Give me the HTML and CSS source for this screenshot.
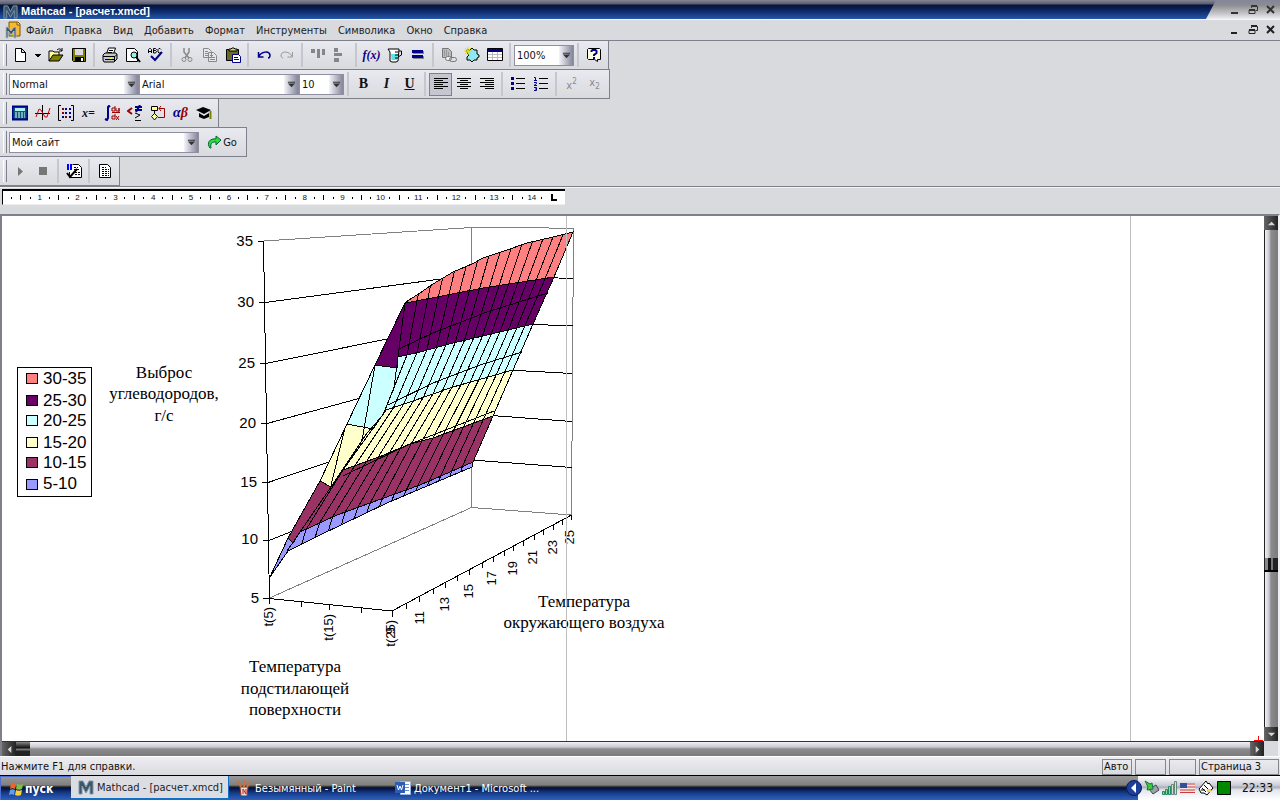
FILE: index.html
```html
<!DOCTYPE html>
<html lang="ru">
<head>
  <meta charset="UTF-8" />
  <meta name="viewport" content="width=device-width, initial-scale=1" />
  <title>Mathcad - [расчет.xmcd]</title>
  <link rel="stylesheet" href="styles.css">
</head>
<body>
  <header class="titlebar">
    <svg class="logo" viewBox="0 0 16 16"><path d="M1 2h4l3 6 3-6h4v13h-3V7l-4 7-4-7v8H1z" fill="#3d5668" stroke="#7d99a8"/></svg>
    <h1>Mathcad - [расчет.xmcd]</h1>
    <div class="window-buttons title-buttons">
      <button aria-label="Свернуть"><svg viewBox="0 0 10 10"><path d="M1 7h7v2H1z" fill="#333"/></svg></button>
      <button aria-label="Восстановить"><svg viewBox="0 0 10 10"><path d="M3.500 3V1.500h6v4H7.500M1 5.500h6v3H1zM1 4.500h6M3 .5h6" fill="none" stroke="#333"/></svg></button>
      <button aria-label="Закрыть"><svg viewBox="0 0 10 10"><path d="M1 1l7 7M8 1l-7 7" stroke="#333" stroke-width="2"/></svg></button>
    </div>
  </header>

  <nav class="menubar" aria-label="Меню">
    <svg class="doc-logo" viewBox="0 0 16 18"><path d="M4 1h9l2 2v12H4z" fill="#fdb827" stroke="#7a5200"/><path d="M12 1v3h3" fill="#fff3b0" stroke="#7a5200"/><path d="M1 6h2l3 4 3-4h2v11H9v-7l-3 4-3-4v7H1z" fill="#3d5668" stroke="#a9bcc6"/></svg>
    <a href="#">Файл</a>
    <a href="#">Правка</a>
    <a href="#">Вид</a>
    <a href="#">Добавить</a>
    <a href="#">Формат</a>
    <a href="#">Инструменты</a>
    <a href="#">Символика</a>
    <a href="#">Окно</a>
    <a href="#">Справка</a>
    <div class="window-buttons">
      <button aria-label="Свернуть документ"><svg viewBox="0 0 10 10"><path d="M1 7h6v2H1z" fill="#222"/></svg></button>
      <button aria-label="Восстановить документ"><svg viewBox="0 0 10 10"><path d="M3.500 3V1.500h6v4H7.500M1 5.500h6v3H1zM1 4.500h6M3 .5h6" fill="none" stroke="#222"/></svg></button>
      <button aria-label="Закрыть документ"><svg viewBox="0 0 10 10"><path d="M1 1l7 7M8 1l-7 7" stroke="#222" stroke-width="2"/></svg></button>
    </div>
  </nav>

  <div class="toolbars">
    <div class="toolbar" role="toolbar" aria-label="Стандартная">
      <button aria-label="Создать"><svg viewBox="0 0 16 16"><path d="M3.500 1.500h6l4 4v9h-10zM9.500 1.500v4h4" fill="#fff" stroke="#000"/></svg></button>
      <button class="narrow" aria-label="Шаблоны"><svg viewBox="0 0 16 16"><path d="M5 7h6v1h-1v1H9v1H7V9H6V8H5z"/></svg></button>
      <button aria-label="Открыть"><svg viewBox="0 0 16 16"><path d="M1 14V4h4l1 1h5v3" fill="#ff9" stroke="#000"/><path d="M1 14l4-6h10l-4 6z" fill="#808000" stroke="#000"/><path d="M9 3c2-2 4-1 5 1M14 1v3h-3" fill="none" stroke="#000"/></svg></button>
      <button aria-label="Сохранить"><svg viewBox="0 0 16 16"><path d="M1.500 1.500h13v13h-12l-1-1z" fill="#808000" stroke="#000"/><path d="M4 2h8v6H4z" fill="#dadbe0"/><path d="M4 10h9v5H4z"/><path d="M10 11h2v3h-2z" fill="#fff"/></svg></button>
      <span class="sep"></span>
      <button aria-label="Печать"><svg viewBox="0 0 16 16"><path d="M4.500 7l2-6h7l-2 6" fill="#fff" stroke="#000"/><path d="M7 3.500h4M6 5.500h4" stroke="#000"/><path d="M1 8l2-2h11l1 2v4l-3 3H2l-1-2z" fill="#c6c6c6" stroke="#000"/><path d="M1 9.500h12l2-2M3 12.500h9M12.500 10v4" stroke="#000" fill="none"/><path d="M8 11h2v1H8z" fill="#ff0"/></svg></button>
      <button aria-label="Просмотр"><svg viewBox="0 0 16 16"><path d="M1.500 1.500h8l3 3v10h-11z" fill="#fff" stroke="#000"/><circle cx="9" cy="8" r="3" fill="#9ee" stroke="#000"/><path d="M11 10l4 5" stroke="#000" stroke-width="2"/></svg></button>
      <button aria-label="Орфография"><svg viewBox="0 0 16 16"><path d="M.5 6V2.500l1-1h1l1 1V6M1 4.500h3M5.500 6V1.500h2l1 1-1 1 1 1-1 1.500zM5.500 3.500h2M13 2.500l-1-1h-1l-1 1V5l1 1h1l1-1" fill="none" stroke="#000"/><path d="M3 9l4 4 7-8" fill="none" stroke="#008" stroke-width="2"/></svg></button>
      <span class="sep"></span>
      <button aria-label="Вырезать"><svg viewBox="0 0 16 16"><path d="M5 1v4l5 6M10 1v4l-4 6" fill="none" stroke="#888" stroke-width="1.500"/><circle cx="5" cy="12.500" r="2" fill="none" stroke="#888"/><circle cx="11" cy="12.500" r="2" fill="none" stroke="#888"/></svg></button>
      <button aria-label="Копировать"><svg viewBox="0 0 16 16"><path d="M1.500 1.500h5l3 3v6h-8zM6.500 5.500h5l3 3v6h-8z" fill="#e6e6ec" stroke="#888"/><path d="M3 4.500h3M3 6.500h3M3 8.500h3M8 8.500h3M8 10.500h5M8 12.500h5" stroke="#888"/></svg></button>
      <button aria-label="Вставить"><svg viewBox="0 0 16 16"><path d="M1.500 2.500h12v11h-12z" fill="#6b6b2a" stroke="#000"/><path d="M4 4V2h2l1-1h2l1 1h2v2z" fill="#dd6" stroke="#000"/><path d="M7.500 7.500h6l2 2v6h-8z" fill="#fff" stroke="#008"/><path d="M9 10.500h4M9 12.500h5" stroke="#008"/></svg></button>
      <span class="sep"></span>
      <button aria-label="Отменить"><svg viewBox="0 0 16 16"><path d="M2.500 5v5h5M3 9c2-4 10-6 11-1 0 2-1 3-2 3" fill="none" stroke="#008" stroke-width="1.500"/></svg></button>
      <button aria-label="Повторить"><svg viewBox="0 0 16 16"><path d="M13.500 5v5h-5M13 9C11 5 3 3 2 8c0 2 1 3 2 3" fill="none" stroke="#999"/></svg></button>
      <span class="sep"></span>
      <button aria-label="Выровнять по верху"><svg viewBox="0 0 16 16"><path d="M1 2h4v4H1zM7 2h3v9H7zM12 2h3v6h-3z" fill="#85868c"/></svg></button>
      <button aria-label="Выровнять по левому краю"><svg viewBox="0 0 16 16"><path d="M1 1h4v4H1zM1 6h8v3H1zM1 11h5v4H1z" fill="#85868c"/></svg></button>
      <span class="sep"></span>
      <button class="fx" aria-label="Вставить функцию">f(x)</button>
      <button aria-label="Единицы"><svg viewBox="0 0 16 16"><path d="M1 2h11l-1 12-2 1H5l-2-1L3 5z" fill="#fff" stroke="#000"/><path d="M4 7h7l-.500 6H4.500z" fill="#5de0e8"/><path d="M12 4h2.500v4L11 10M8 5h3M8 8h3M8 11h3" fill="none" stroke="#000"/></svg></button>
      <button aria-label="Вычислить"><svg viewBox="0 0 16 16"><path d="M3 4h11v3H3zM3 9h11v3H3z" fill="#888"/><path d="M2 3h11v3H2zM2 8h11v3H2z" fill="#008"/></svg></button>
      <span class="sep"></span>
      <button aria-label="Гиперссылка"><svg viewBox="0 0 16 16"><path d="M1.500 1.500h6l3 3v6h-9z" fill="#bbb" stroke="#777"/><path d="M3 4h4M3 6h5M3 8h5" stroke="#777" stroke-dasharray="1 1"/><rect x="4.500" y="9.500" width="6" height="4" rx="2" fill="#eee" stroke="#777"/><rect x="8.500" y="10.500" width="7" height="4" rx="2" fill="none" stroke="#777"/></svg></button>
      <button aria-label="Компонент"><svg viewBox="0 0 16 16"><path d="M3 3h3l2-2 2 2h3v4l2 1v2l-2 1v2h-3l-2 2-2-2H3v-3l2-2-2-2z" fill="#8eeaf0" stroke="#000"/><path d="M1 1l6 6M7 1L1 7M4 0v8M0 4h8" stroke="#e6dc00"/></svg></button>
      <button aria-label="Таблица"><svg viewBox="0 0 16 16"><path d="M.5 1.500h15v12H.5z" fill="#fff" stroke="#000"/><path d="M1 2h14v3H1z" fill="#008"/><path d="M5.500 5v8M10.500 5v8M1 7.500h14M1 10.500h14" stroke="#bbb"/></svg></button>
      <span class="sep"></span>
      <span class="combo combo-zoom"><select aria-label="Масштаб"><option>100%</option></select><svg viewBox="0 0 10 10"><path d="M1 2h8v1H1zM1 4h8L5 8z"/></svg></span>
      <span class="sep"></span>
      <button aria-label="Помощь"><svg viewBox="0 0 16 16"><path d="M2.500 1.500h11l1 1v10h-3v2l-3-2h-6l-1-1v-9z" fill="#fffde0" stroke="#000"/><path d="M5.500 5V4l1-1h3l1 1v2L8 8v1" fill="none" stroke="#008" stroke-width="2"/><path d="M7 10h2v2H7z" fill="#008"/></svg></button>
    </div>

    <div class="toolbar" role="toolbar" aria-label="Форматирование">
      <span class="combo combo-style"><select aria-label="Стиль"><option>Normal</option></select><svg viewBox="0 0 10 10"><path d="M1 2h8v1H1zM1 4h8L5 8z"/></svg></span>
      <span class="combo combo-font"><select aria-label="Шрифт"><option>Arial</option></select><svg viewBox="0 0 10 10"><path d="M1 2h8v1H1zM1 4h8L5 8z"/></svg></span>
      <span class="combo combo-size"><select aria-label="Размер"><option>10</option></select><svg viewBox="0 0 10 10"><path d="M1 2h8v1H1zM1 4h8L5 8z"/></svg></span>
      <span class="sep"></span>
      <button class="letter"><b>B</b></button>
      <button class="letter"><i>I</i></button>
      <button class="letter"><u>U</u></button>
      <span class="sep"></span>
      <button class="pressed" aria-label="По левому краю"><svg viewBox="0 0 16 16"><path d="M1 2.500h14M1 4.500h9M1 6.500h14M1 8.500h9M1 10.500h14M1 12.500h9" stroke="#000"/></svg></button>
      <button aria-label="По центру"><svg viewBox="0 0 16 16"><path d="M1 2.500h14M4 4.500h8M1 6.500h14M4 8.500h8M1 10.500h14M4 12.500h8" stroke="#000"/></svg></button>
      <button aria-label="По правому краю"><svg viewBox="0 0 16 16"><path d="M1 2.500h14M6 4.500h9M1 6.500h14M6 8.500h9M1 10.500h14M6 12.500h9" stroke="#000"/></svg></button>
      <span class="sep"></span>
      <button aria-label="Маркеры"><svg viewBox="0 0 16 16"><path d="M1 1h3v3H1zM1 6h3v3H1zM1 11h3v3H1z" fill="#008"/><path d="M6 2.500h9M6 7.500h9M6 12.500h9" stroke="#000"/></svg></button>
      <button aria-label="Нумерация"><svg viewBox="0 0 16 16"><path d="M1 1.500h1.500V4M1 4.500h3M1 6.500h2.500v1L1 9.500h3M1 11.500h2.500v3H1M2 13h1" stroke="#008" fill="none"/><path d="M6 2.500h9M6 7.500h9M6 12.500h9" stroke="#000"/></svg></button>
      <span class="sep"></span>
      <button class="script" aria-label="Верхний индекс"><span>x<sup>2</sup></span></button>
      <button class="script" aria-label="Нижний индекс"><span>x<sub>2</sub></span></button>
    </div>

    <div class="toolbar" role="toolbar" aria-label="Математика">
      <button aria-label="Калькулятор"><svg viewBox="0 0 16 16"><path d="M.5 1.500h15v13H.5z" fill="#0a5a78" stroke="#008" stroke-width="2"/><path d="M3 3h10v3H3z" fill="#aef0f0"/><path d="M3 8h10M3 10h10M3 12h10" stroke="#dff" stroke-dasharray="2 1"/></svg></button>
      <button aria-label="Графики"><svg viewBox="0 0 16 16"><path d="M7.500 0v15M0 8.500h15" stroke="#000"/><path d="M1 12L4 4l2 1 4 7h2l3-9" fill="none" stroke="#d00000"/></svg></button>
      <button aria-label="Матрица"><svg viewBox="0 0 16 16"><path d="M3 .5H.5v15H3M13 .5h2.500v15H13" fill="none" stroke="#000"/><path d="M4 3h2v2H4zM4 7h2v2H4zM7 11h2v2H7z" fill="#800000"/><path d="M7 3h2v2H7zM11 3h2v2h-2zM7 7h2v2H7zM11 7h2v2h-2zM4 11h2v2H4zM11 11h2v2h-2z" fill="#008"/></svg></button>
      <button class="xeq" aria-label="Вычисления">x<b>=</b></button>
      <button aria-label="Матанализ"><svg viewBox="0 0 16 16"><path d="M6 2L5 1 4 2v11l-1 2-2-1" fill="none" stroke="#008" stroke-width="2"/><path d="M8 7.500h8M11 1v5H8V3h3M12 3v3h3V3M15 3v5M11 9v5H8v-3h3M12 11l3 4M15 11l-3 4" fill="none" stroke="#900"/></svg></button>
      <button aria-label="Булева"><svg viewBox="0 0 16 16"><path d="M5 3L1 6l4 3" fill="none" stroke="#900" stroke-width="2"/><path d="M8 2h7M8 5h7M13 0L9 7" stroke="#008" stroke-width="2"/><path d="M8 8l5 2-5 3M8 15.500h6" fill="none" stroke="#000"/></svg></button>
      <button aria-label="Программирование"><svg viewBox="0 0 16 16"><path d="M1.500 1.500h6v4h-6z" fill="#ff9" stroke="#000"/><path d="M4.500 6v3" stroke="#000"/><path d="M4.500 8.500l3 3-3 3.500-3-3.500z" fill="#ff9" stroke="#008"/><path d="M8 12.500h6.500v-9H9M11 1L9 3.500 11 6" fill="none" stroke="#900"/></svg></button>
      <button class="greek" aria-label="Греческие символы"><i>α</i><i>β</i></button>
      <button aria-label="Символика"><svg viewBox="0 0 16 16"><path d="M0 5l7-3 8 3-7 4z"/><path d="M3 8l5 3 5-3v4l-5 2-5-2z"/><path d="M14.500 6v8" stroke="#808000" stroke-width="2"/></svg></button>
    </div>

    <div class="toolbar" role="toolbar" aria-label="Ресурсы">
      <span class="combo combo-site"><select aria-label="Адрес"><option>Мой сайт</option></select><svg viewBox="0 0 10 10"><path d="M1 2h8v1H1zM1 4h8L5 8z"/></svg></span>
      <button class="go"><svg viewBox="0 0 16 16"><path d="M3 14C-1 9 3 4 9 5V2l5 4-5 5V8C5 8 3 9 4 14z" fill="#2fdc3c" stroke="#063"/></svg>Go</button>
    </div>

    <div class="toolbar" role="toolbar" aria-label="Отладка">
      <button aria-label="Пуск"><svg viewBox="0 0 16 16"><path d="M6 4l5 4.500L6 13z" fill="#777"/></svg></button>
      <button aria-label="Стоп"><svg viewBox="0 0 16 16"><path d="M4 4h8v8H4z" fill="#777"/></svg></button>
      <span class="sep"></span>
      <button aria-label="Отладка"><svg viewBox="0 0 16 16"><path d="M6.500 1.500h6l3 3v10h-12V9" fill="#fff" stroke="#000"/><path d="M8 4.500h4M8 6.500h5M9 9.500h5M9 11.500h5" stroke="#000" stroke-dasharray="2 1"/><path d="M1 1h2v6H1zM4 1h2v6H4z" fill="#00f"/><path d="M1 10l3 4 7-8" fill="none" stroke="#000" stroke-width="2"/></svg></button>
      <span class="sep"></span>
      <button aria-label="Журнал"><svg viewBox="0 0 16 16"><path d="M2.500 1.500h8l3 3v10h-11z" fill="#fff" stroke="#000"/><path d="M5 4.500h4M5 6.500h7M5 8.500h7M5 10.500h7M5 12.500h7" stroke="#000" stroke-dasharray="2 1"/></svg></button>
    </div>
  </div>

  <div class="ruler-bar">
    <div class="ruler">
      <div class="ruler-scale" id="rulerScale"></div>
      <svg class="tab-mark" viewBox="0 0 6 8"><path d="M0 0h2v5h4v2H0z"/></svg>
    </div>
  </div>

  <main class="workspace">
    <div class="page">
      <svg class="chart" viewBox="2 216 700 510" role="img" aria-label="Выброс углеводородов">
        <g class="wall">
          <path d="M264 241L471.500 227.500H523L573.500 228.500L571.500 515L471.500 507.500L269.500 598M471.500 227.500V507.500"/>
        </g>
        <g class="line">
          <path d="M263.500 241L269.500 604M258 241.500h6M259 302.500h6M260 363.500h6M261 423.500h6M262 482.500h6M263 540.500h6M263 598.500h6"/>
          <path d="M265 302.500L471 275L573 278.500M266 363.500L471 322L573 326M267 423.500L471 368L572 373.500M268 482.500L471 414L572 421.500M269 540.500L471 460L572 467.500"/>
          <path d="M269.500 598.500L392 611L571.500 515"/>
          <path d="M301 602v5M329.500 605v5M361.500 608v5M392 611v6"/>
          <path id="ticks"/>
        </g>
        <g id="bands"></g>
        <g class="line">
          <path id="mesh"/>
          <path d="M375 365L363 435L360 446L331 487M399 349L433 333L487 312L548 293M388 405L433 383L480 365L522 352M386 454L410 444L494 411M343 476L372 462L410 444M405 303L398 357L394 388L383 415L367 433L331 487L300 532L287 551M345 428L331 485"/>
        </g>
        <g class="axis">
          <text x="253" y="246" text-anchor="end">35</text>
          <text x="254" y="307" text-anchor="end">30</text>
          <text x="255" y="368" text-anchor="end">25</text>
          <text x="256" y="428" text-anchor="end">20</text>
          <text x="257" y="487" text-anchor="end">15</text>
          <text x="258" y="544" text-anchor="end">10</text>
          <text x="259" y="603" text-anchor="end">5</text>
        </g>
        <g class="axis turned" id="turned"></g>
        <g class="caption">
          <text x="164" y="378">Выброс</text>
          <text x="164" y="399">углеводородов,</text>
          <text x="164" y="421">г/с</text>
          <text x="584" y="607">Температура</text>
          <text x="584" y="628">окружающего воздуха</text>
          <text x="295" y="672">Температура</text>
          <text x="295" y="694">подстилающей</text>
          <text x="295" y="715">поверхности</text>
        </g>
        <g class="legend">
          <rect class="legend-box" x="17.500" y="367.500" width="74" height="129"/>
          <rect x="26.500" y="373.500" width="11" height="10" fill="#ff8080"/><text x="43" y="384">30-35</text>
          <rect x="26.500" y="395.500" width="11" height="10" fill="#660066"/><text x="43" y="406">25-30</text>
          <rect x="26.500" y="415.500" width="11" height="10" fill="#ccffff"/><text x="43" y="426">20-25</text>
          <rect x="26.500" y="437.500" width="11" height="10" fill="#ffffcc"/><text x="43" y="448">15-20</text>
          <rect x="26.500" y="457.500" width="11" height="10" fill="#993366"/><text x="43" y="468">10-15</text>
          <rect x="26.500" y="479.500" width="11" height="10" fill="#9999ff"/><text x="43" y="489">5-10</text>
        </g>
      </svg>
      <span class="page-line margin-line"></span>
      <span class="page-line edge-line"></span>
      <svg class="cross" viewBox="0 0 9 9"><path d="M4.500 0v9M0 4.500h9" stroke="#f00"/></svg>
    </div>
    <div class="scroll scroll-v">
      <button aria-label="Вверх"><svg viewBox="0 0 10 10"><path d="M1 7h8L5 3z" fill="#d4d4d4"/></svg></button>
      <span class="track-before"></span>
      <span class="thumb"></span>
      <span class="track-after"></span>
      <button aria-label="Вниз"><svg viewBox="0 0 10 10"><path d="M1 3h8L5 7z" fill="#d4d4d4"/></svg></button>
    </div>
    <div class="scroll scroll-h">
      <button aria-label="Влево"><svg viewBox="0 0 10 10"><path d="M7 1v8L3 5z" fill="#d4d4d4"/></svg></button>
      <span class="thumb"></span>
      <span class="track-after"></span>
      <button aria-label="Вправо"><svg viewBox="0 0 10 10"><path d="M3 1v8l4-4z" fill="#d4d4d4"/></svg></button>
    </div>
  </main>

  <div class="statusbar">
    <span class="hint">Нажмите F1 для справки.</span>
    <span class="cell cell-auto">Авто</span>
    <span class="cell cell-empty"></span>
    <span class="cell cell-small"></span>
    <span class="cell cell-page">Страница 3</span>
  </div>

  <footer class="taskbar">
    <button class="start"><svg viewBox="0 0 16 16"><path d="M2 3c2-2 4-1 5 0L6 8C4 7 3 7 1 8z" fill="#f0642c"/><path d="M8 3c2 1 4 1 6 0l-1 5c-2 1-4 1-6 0z" fill="#7cc142"/><path d="M1 9c2-1 3-1 5 0l-1 5c-2-1-3-1-5 0z" fill="#5aa0ee"/><path d="M7 9c2 1 4 1 6 0l-1 5c-2 1-4 1-6 0z" fill="#fccb3a"/></svg>пуск</button>
    <button class="task active"><svg viewBox="0 0 16 16"><path d="M1 2h4l3 6 3-6h4v13h-3V7l-4 7-4-7v8H1z" fill="#3d5668" stroke="#7d99a8"/></svg>Mathcad - [расчет.xmcd]</button>
    <button class="task"><svg viewBox="0 0 16 16"><path d="M4 7h8l-1 9H5z" fill="#e9d9d2" stroke="#8c3a26"/><path d="M5 7L2 1M8 7V0M11 7l3-5" stroke="#c9703c" stroke-width="2"/><path d="M7 9v5M7 9l3 5V9" stroke="#c22" fill="none"/></svg>Безымянный - Paint</button>
    <button class="task"><svg viewBox="0 0 16 16"><path d="M5.500 1.500h10v13h-10z" fill="#fff" stroke="#9bb4dc"/><path d="M7 4.500h7M7 7.500h7M7 10.500h7" stroke="#6a8fd0"/><path d="M0 2h10v11H0z" fill="#2a5cb8"/><path d="M2 5l1.500 5L5 6l1.500 4L8 5" fill="none" stroke="#fff"/></svg>Документ1 - Microsoft ...</button>
    <div class="tray">
      <svg viewBox="0 0 16 16"><circle cx="8" cy="8" r="7.500" fill="#1c3f9c" stroke="#0a1c50"/><path d="M10 3v10L5 8z" fill="#fff"/></svg>
      <svg viewBox="0 0 16 16"><path d="M5 9l7-4 3 5-6 4z" fill="#9aa4a8" stroke="#445"/><path d="M1 1l5 3 2-1 1 6-6 1 1-3z" fill="#3ecb3a" stroke="#174"/></svg>
      <svg viewBox="0 0 16 16"><path d="M.5 11.500h2v3h-2zM3.500 9.500h2v5h-2zM6.500 6.500h2v8h-2z" fill="#8fe08f" stroke="#286"/><path d="M9.500 4.500h2v10h-2zM12.500 1.500h2v13h-2z" fill="#ddd" stroke="#687"/></svg>
      <svg viewBox="0 0 16 16"><path d="M0 3h15v10H0z" fill="#f3e6e6"/><path d="M0 4h15M0 7h15M0 10h15M0 12.500h15" stroke="#c83c3c"/><path d="M0 3h7v5H0z" fill="#34509c"/></svg>
      <svg viewBox="0 0 16 16"><path d="M1 9l7-8 2 3 1-1 4 5-6 7-3-2H3z" fill="#fff" stroke="#000"/><path d="M6 5l4 4M4 8l4 4M3 10h4" stroke="#000"/><path d="M9 9h4v3H9z" fill="#fc5"/></svg>
      <svg viewBox="0 0 16 16"><path d="M1.500 1.500h13v13h-13z" fill="#080" stroke="#000"/></svg>
      <time>22:33</time>
    </div>
  </footer>

<script>
  const ns = 'http://www.w3.org/2000/svg';

  // ruler: half-centimetre tick, dot, number, dot
  let cells = '<i class="first-dot"></i>';
  for (let n = 1; n <= 14; n++) {
    cells += `<span><i class="tick"></i><i class="dot"></i><em>${n}</em><i class="dot"></i></span>`;
  }
  document.getElementById('rulerScale').innerHTML = cells;

  // level lines of the surface, from 5 up to 35
  const levels = [
    [[270, 577], [288, 551], [320, 535], [387, 503], [472, 467]],
    [[288, 538], [293, 543], [300, 532], [337, 515], [370, 503], [420, 485], [473, 462]],
    [[320, 481], [331, 487], [343, 470], [387, 454], [410, 444], [433, 438], [493, 416]],
    [[347, 424], [373, 429], [386, 410], [410, 402], [453, 387], [513, 370]],
    [[375, 365], [397, 368], [398, 357], [420, 352], [453, 343], [487, 335], [533, 324]],
    [[405, 303], [406, 303], [483, 288], [554, 277]],
    [[405, 303], [406, 302], [420, 293], [433, 284], [453, 272], [472, 264], [483, 258], [507, 250], [527, 243], [553, 237], [573, 232]]
  ];
  const colors = ['#9999ff', '#993366', '#ffffcc', '#ccffff', '#660066', '#ff8080'];

  const bands = document.getElementById('bands');
  colors.forEach((color, i) => {
    const band = document.createElementNS(ns, 'polygon');
    band.setAttribute('points', levels[i].concat([...levels[i + 1]].reverse()).join(' '));
    band.setAttribute('fill', color);
    bands.appendChild(band);
  });

  function heightAt(level, x) {
    for (let i = 2; i < level.length; i++) {
      const [x1, y1] = level[i - 1];
      const [x2, y2] = level[i];
      if (x <= x2) return y1 + (y2 - y1) * (x - x1) / (x2 - x1);
    }
    return level[level.length - 1][1];
  }

  let mesh = '';
  for (let i = 1; i < 15; i++) {
    const t = i / 15 * (1 + 0.12 * (1 - i / 15));
    levels.forEach((level, n) => {
      const left = level[1][0];
      const x = left + (level[level.length - 1][0] - left) * t;
      mesh += `${n ? 'L' : 'M'}${x.toFixed(1)} ${heightAt(level, x).toFixed(1)}`;
    });
  }
  document.getElementById('mesh').setAttribute('d', mesh);

  // ticks of the right axis
  let ticks = '';
  [406, 419, 433, 445, 457, 469, 482, 493, 504, 513, 523, 534, 543, 553, 562, 571].forEach(x => {
    ticks += `M${x + 0.5} ${Math.round(611 - (x - 392) * 96 / 179.5)}v5`;
  });
  document.getElementById('ticks').setAttribute('d', ticks);

  const labels = [
    ['t(5)', 273, 607], ['t(15)', 333, 614], ['t(25)', 395, 620], ['9', 395, 627],
    ['11', 424, 611], ['13', 449, 597], ['15', 473, 584], ['17', 496, 571],
    ['19', 517, 561], ['21', 537, 550], ['23', 557, 540], ['25', 574, 530]
  ];
  const turned = document.getElementById('turned');
  labels.forEach(([label, x, y]) => {
    const text = document.createElementNS(ns, 'text');
    text.setAttribute('transform', `translate(${x} ${y}) rotate(-90)`);
    text.textContent = label;
    turned.appendChild(text);
  });
</script>
</body>
</html>
```
FILE: styles.css
```css
:root {
  --face: #d9dade;
  --bar: #e2e3e9;
  --edge: #7e808b;
  --ui-font: "DejaVu Sans Condensed", "Noto Sans", sans-serif;
}
* {
  box-sizing: border-box;
}
body {
  margin: 0;
  height: 100vh;
  display: flex;
  flex-direction: column;
  overflow: hidden;
  background: var(--face);
  color: #111;
  font-family: var(--ui-font);
  font-size: 11px;
}
button {
  padding: 0;
  border: none;
  background: none;
  color: inherit;
  font: inherit;
}
svg {
  display: block;
  flex: none;
}

/* title and menu */
.titlebar {
  display: flex;
  align-items: center;
  height: 19px;
  padding-left: 3px;
  background: linear-gradient(#85869a 0, #5c5c68 4px, #04123c 5px, #0c2a68 11px, #2558a8 19px);
}
.logo {
  width: 15px;
  height: 15px;
  margin-top: 3px;
}
.titlebar h1 {
  flex: 1;
  margin: 3px 0 0 3px;
  color: #fff;
  font: bold 11px "Liberation Sans", sans-serif;
}
.window-buttons {
  display: flex;
  gap: 8px;
  margin-left: auto;
  padding-right: 4px;
}
.window-buttons svg {
  width: 10px;
  height: 10px;
}
.title-buttons {
  align-self: stretch;
  align-items: center;
  padding-left: 24px;
  background: linear-gradient(#85869a 0, #8c8c90 5px, #d0d0d4 15px, #efeff3 19px);
  clip-path: polygon(10px 0, 100% 0, 100% 100%, 0 100%);
}
.menubar {
  display: flex;
  align-items: center;
  gap: 11px;
  height: 21px;
  padding-left: 5px;
  border-top: 1px solid #f5f5f8;
}
.menubar a {
  color: #222;
  text-decoration: none;
}
.doc-logo {
  width: 16px;
  height: 18px;
  margin-right: -6px;
}

/* toolbars */
.toolbars {
  display: flex;
  flex-direction: column;
  align-items: flex-start;
  padding-top: 1px;
  border-bottom: 1px solid var(--edge);
  box-shadow: inset 0 1px var(--edge), 0 1px #f4f4f8;
}
.toolbar {
  position: relative;
  display: flex;
  align-items: center;
  height: 30px;
  margin-top: -1px;
  padding: 0 3px 0 8px;
  border: 1px solid var(--edge);
  border-left: none;
  background: linear-gradient(#e9eaf0, var(--face));
}
.toolbar::before {
  content: "";
  position: absolute;
  left: 3px;
  top: 3px;
  bottom: 3px;
  width: 2px;
  border-left: 1px solid #fff;
  border-right: 1px solid var(--edge);
}
.toolbar button {
  display: flex;
  align-items: center;
  justify-content: center;
  width: 23px;
  height: 23px;
}
.toolbar button svg {
  width: 16px;
  height: 16px;
}
.toolbar .narrow {
  width: 13px;
}
.sep {
  width: 8px;
  height: 24px;
  background: linear-gradient(#c6c7ce, #c6c7ce) 3px 0 / 2px 100% no-repeat;
}
.toolbar .pressed {
  background: #c5c6d0;
  border: 1px solid var(--edge);
}
.toolbar .fx {
  color: #008;
  font: italic bold 12px "Liberation Serif", serif;
}
.toolbar .letter {
  font: 14px "Liberation Serif", serif;
}
.letter i,
.letter u {
  font-weight: bold;
}
.toolbar .script {
  color: #888;
}
.script sup,
.script sub {
  font-size: 8px;
}
.toolbar .xeq {
  font: italic bold 12px "Liberation Serif", serif;
}
.xeq b {
  color: #008;
}
.toolbar .greek {
  color: #008;
  font: bold 14px "Liberation Serif", serif;
}
.greek i + i {
  color: #900;
}
.toolbar .go {
  width: 42px;
  margin-left: 2px;
}

.combo {
  position: relative;
  height: 21px;
}
.combo select {
  width: 100%;
  height: 100%;
  padding: 0 14px 0 2px;
  border: 1px solid #8e90a0;
  border-radius: 0;
  background: linear-gradient(90deg, #f4f4fa, #83859a) right / 14px 100% no-repeat #fff;
  color: #111;
  font: inherit;
  appearance: none;
}
.combo svg {
  position: absolute;
  right: 3px;
  top: 6px;
  width: 9px;
  height: 9px;
  fill: #333;
  pointer-events: none;
}
.combo:first-child { margin-left: 1px; }
.combo-zoom { width: 60px; }
.combo-style { width: 130px; }
.combo-font { width: 160px; }
.combo-size { width: 45px; }
.combo-site { width: 190px; }

/* ruler */
.ruler-bar {
  height: 27px;
  padding: 2px 2px 0;
}
.ruler {
  display: flex;
  align-items: center;
  width: 563px;
  height: 16px;
  background: #fff;
  border-top: 2px solid #000;
  border-left: 1px solid #000;
  border-bottom: 1px solid #eee;
}
.ruler-scale {
  display: flex;
  flex: 1;
  align-items: center;
  font: 8px "Liberation Sans", sans-serif;
}
.ruler-scale span {
  flex: 1;
  display: grid;
  grid-template-columns: repeat(4, 1fr);
  align-items: center;
  justify-items: center;
}
.ruler-scale em {
  font-style: normal;
}
.dot,
.first-dot {
  width: 1px;
  height: 2px;
  background: #000;
}
.first-dot {
  margin: 0 4px 0 8px;
}
.tick {
  width: 1px;
  height: 5px;
  background: #000;
}
.tab-mark {
  width: 6px;
  height: 8px;
  margin: 0 8px 0 5px;
}

/* worksheet */
.workspace {
  flex: 1;
  min-height: 0;
  display: grid;
  grid-template: 1fr 15px / 1fr 14px;
  border: solid var(--edge);
  border-width: 2px 2px 0;
  border-right-color: #f0f0f4;
}
.page {
  position: relative;
  overflow: hidden;
  background: #fff;
}
.chart {
  width: 700px;
  height: 510px;
}
.chart .wall {
  fill: none;
  stroke: #808080;
  shape-rendering: crispEdges;
}
.chart .line {
  fill: none;
  stroke: #000;
  shape-rendering: crispEdges;
}
#bands {
  stroke: #000;
  shape-rendering: crispEdges;
}
.axis {
  font: 15px "Liberation Sans", sans-serif;
}
.turned {
  font-size: 13px;
  text-anchor: end;
}
.caption {
  font: 17px "Liberation Serif", serif;
  text-anchor: middle;
}
.legend {
  font: 17px "Liberation Sans", sans-serif;
}
.legend rect {
  stroke: #000;
}
.legend .legend-box {
  fill: #fff;
}
.page-line {
  position: absolute;
  top: 0;
  bottom: 0;
  width: 1px;
  background: #bdbdbd;
}
.margin-line { left: 564px; }
.edge-line { left: 1128px; }
.cross {
  position: absolute;
  right: 1px;
  bottom: -4px;
  width: 9px;
  height: 9px;
}

.scroll {
  display: flex;
}
.scroll button {
  display: flex;
  align-items: center;
  justify-content: center;
  width: 14px;
  height: 14px;
  background: linear-gradient(90deg, #666, #222);
}
.scroll svg {
  width: 9px;
  height: 9px;
}
.scroll-v {
  flex-direction: column;
  background: linear-gradient(90deg, #222 1px, #f0f0f6 1px, #c9c9d0 5px, #8b8b8b 7px, #7b7b7b);
}
.scroll-v .track-before { flex: 68; }
.scroll-v .track-after { flex: 32; }
.scroll-v .thumb {
  height: 14px;
  border-bottom: 2px solid #000;
  background: linear-gradient(90deg, #222 1px, #888 1px, #888 4px, #111 4px, #111 7px, #777 7px, #777 9px, #222 9px);
}
.scroll-h {
  border-top: 1px solid #333;
  background: linear-gradient(#f0f0f6, #c9c9d0 5px, #8b8b8b 7px, #7b7b7b);
}
.scroll-h .thumb {
  width: 14px;
  background: linear-gradient(#888, #333 4px, #111 6px, #777 7px, #777 8px, #222 9px);
}
.scroll-h .track-after { flex: 1; }

/* status bar and taskbar */
.statusbar {
  display: flex;
  align-items: center;
  gap: 3px;
  height: 19px;
  padding: 1px 1px 0;
  border-top: 1px solid #fff;
  background: linear-gradient(#eeeef2, #d9dade);
}
.hint {
  flex: 1;
}
.cell {
  height: 16px;
  padding-left: 1px;
  border: 1px solid #85868c;
  line-height: 14px;
}
.cell-auto { width: 30px; }
.cell-empty { width: 31px; }
.cell-small { width: 27px; }
.cell-page { width: 80px; }

.taskbar {
  display: flex;
  align-items: stretch;
  height: 25px;
  border-top: 1px solid #000;
  background: linear-gradient(#999 0, #808080 9px, #222 11px, #001040 12px, #183c88 17px, #2f66c8 25px);
  color: #fff;
}
.taskbar svg {
  width: 16px;
  height: 16px;
}
.taskbar button {
  display: flex;
  align-items: center;
}
.start {
  width: 71px;
}
.taskbar .start {
  padding-left: 8px;
  border-top: 1px solid #4a6fd0;
  border-left: 1px solid #4a6fd0;
  font-weight: bold;
  font-size: 12px;
}
.task {
  width: 159px;
  gap: 3px;
  white-space: nowrap;
}
.taskbar .task {
  padding-left: 7px;
}
.taskbar .active {
  width: 158px;
  border: solid #1070c8;
  border-width: 0 1px 2px 0;
  background: #dcdde2;
  color: #222;
}
.tray {
  display: flex;
  align-items: center;
  gap: 2px;
  width: 154px;
  margin-left: auto;
  background: linear-gradient(#fff, #c8c8d4 10px, #a8a8b0 11px, #e4e6ee 14px, #fff) 12px 0 no-repeat;
  color: #111;
}
.tray time {
  margin-left: auto;
  padding-right: 7px;
  font-size: 12px;
}
```
